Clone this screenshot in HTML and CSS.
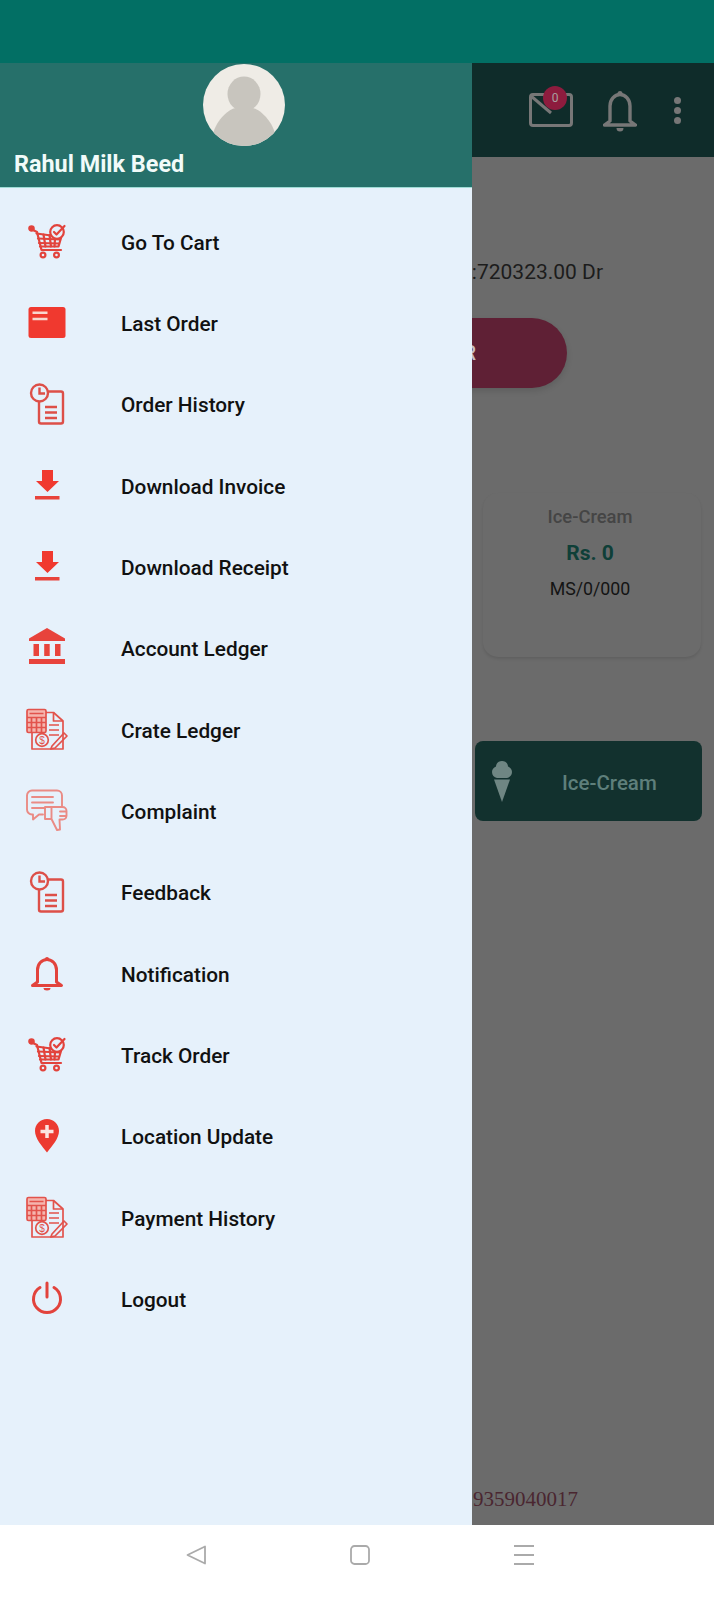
FILE: index.html
```html
<!DOCTYPE html>
<html lang="en">
<head>
    <meta charset="UTF-8">
    <meta name="viewport" content="width=device-width, initial-scale=1.0">
    <title>Rahul Milk Beed</title>
    <link rel="stylesheet" href="styles.css">
</head>
<body>
    <svg class="sprite" width="0" height="0">
        <symbol id="i-cart" viewBox="0 0 46 46">
            <g fill="none" stroke="#e2433c" stroke-width="2.200" stroke-linecap="round" stroke-linejoin="round">
                <circle cx="7.500" cy="8.500" r="2.200" fill="#e2433c"/>
                <path d="M9 10l4 2 4.500 18H37"/>
                <path d="M12.500 13.500L27 15.500M37 18l-2.500 8.500H16M14 18.500l22 1M15 23l20 .5"/>
                <path d="M19.500 14.500l2 12M25.500 15l1.500 11.500M31 19l-.5 7.500"/>
                <circle cx="33" cy="12" r="6.800" fill="#e6f1fb"/>
                <path d="M30 12l2.500 2.500 8-8.500"/>
                <circle cx="19" cy="35" r="2.400"/>
                <circle cx="32.500" cy="35" r="2.400"/>
            </g>
        </symbol>
        <symbol id="i-card" viewBox="0 0 46 46">
            <rect x="4.500" y="6" width="37" height="31" rx="2.500" fill="#f0392f"/>
            <path d="M8.500 11.700h15M8.500 18h15" stroke="#f8d5cf" stroke-width="2.500"/>
        </symbol>
        <symbol id="i-history" viewBox="0 0 46 46">
            <g fill="none" stroke="#dd4f48" stroke-width="2.400">
                <rect x="15" y="9.500" width="24" height="32" rx="2"/>
                <path d="M21 25h12M21 30.500h12M21 36h12"/>
                <circle cx="15.500" cy="11" r="8.500" fill="#e6f1fb"/>
                <path d="M15.500 5.500V11.500H21"/>
            </g>
        </symbol>
        <symbol id="i-download" viewBox="0 0 46 46">
            <path d="M18 6h11v11h6L23.500 28 12 17h6z" fill="#f0392f"/>
            <rect x="11" y="32" width="24.500" height="3.500" fill="#e8433a"/>
        </symbol>
        <symbol id="i-bank" viewBox="0 0 46 46">
            <g fill="#e8433c">
                <path d="M23 2L41 12.500V15H5V12.500z"/>
                <rect x="9.500" y="18" width="5.500" height="12"/>
                <rect x="20.200" y="18" width="5.500" height="12"/>
                <rect x="31" y="18" width="5.500" height="12"/>
                <rect x="5" y="33" width="36" height="5"/>
            </g>
        </symbol>
        <symbol id="i-ledger" viewBox="0 0 46 46">
            <g fill="none" stroke="#e2534c" stroke-width="1.700" stroke-linejoin="round">
                <path d="M22 4.500H29.500L39 13V41H8V24"/>
                <path d="M29.500 4.500V13H39"/>
                <path d="M25 17h10M25 22h10M25 27h10"/>
                <rect x="3" y="1.500" width="19" height="23" rx="1.500" fill="#f5b5ae"/>
                <path d="M5.500 5.500h14M3 9.500h19M3 14.500h19M3 19.500h19M7.500 9.500v15M12.500 9.500v15M17.500 9.500v15"/>
                <circle cx="18" cy="32" r="6.300"/>
                <path d="M28 38l12-13 3 3-12 12-4.200 1z"/>
            </g>
        </symbol>
        <symbol id="i-complaint" viewBox="0 0 46 46">
            <g fill="none" stroke="#ea8b85" stroke-width="1.900" stroke-linejoin="round" stroke-linecap="round">
                <path d="M8 1.500H33a5 5 0 0 1 5 5V17M19 25.500H15L9 30.500V25.500H8a5 5 0 0 1-5-5V6.500a5 5 0 0 1 5-5"/>
                <path d="M8 8h21M8 13.500h21M8 19h13"/>
                <path d="M21 18h6.500V30H21zM27.500 18H38.500a4 4 0 0 1 4 4V27a4 4 0 0 1-4 3.500H35.500L36 40.500 33 41 27.500 30"/>
                <path d="M36 22.500h6M36 27h6"/>
            </g>
        </symbol>
        <symbol id="i-bell" viewBox="0 0 46 46">
            <path d="M13.500 30V18a9.500 10.500 0 0 1 19 0V30l5 3.500H8.500z" fill="none" stroke="#e2433c" stroke-width="3" stroke-linejoin="round"/>
            <circle cx="23" cy="7" r="2" fill="#e2433c"/>
            <path d="M19.500 36h7a3.500 2.500 0 0 1-7 0z" fill="#e2433c"/>
        </symbol>
        <symbol id="i-pin" viewBox="0 0 46 46">
            <path d="M23 5c6.700 0 12 5.300 12 12 0 7.500-7 15-12 21.500C18 32 11 24.500 11 17 11 10.300 16.300 5 23 5z" fill="#ec3a30"/>
            <path d="M23 11v13M16.500 17.500h13" stroke="#fbe4e0" stroke-width="3.500"/>
        </symbol>
        <symbol id="i-power" viewBox="0 0 46 46">
            <g fill="none" stroke="#e2433c" stroke-width="3" stroke-linecap="round">
                <path d="M16 10.500a13.500 13.500 0 1 0 14 0"/>
                <path d="M23 6V20"/>
            </g>
        </symbol>
    </svg>

    <div class="status-bar"></div>

    <div class="screen">
        <header class="app-bar">
            <div class="mail">
                <svg class="mail-icon" viewBox="0 0 44 34">
                    <rect x="1.500" y="1.500" width="41" height="31" rx="2.500" fill="none" stroke="#777" stroke-width="3"/>
                    <path d="M2 3l20 17" fill="none" stroke="#777" stroke-width="3"/>
                </svg>
                <span class="badge">0</span>
            </div>
            <svg class="bar-bell" viewBox="0 0 34 41">
                <path d="M7 30V15a10 11.500 0 0 1 20 0V30l5.500 4H1.500z" fill="none" stroke="#777" stroke-width="3.400" stroke-linejoin="round"/>
                <circle cx="17" cy="2.500" r="2.500" fill="#777"/>
                <path d="M13.500 37h7a3.500 3.500 0 0 1-7 0z" fill="#777"/>
            </svg>
            <div class="dots"><i></i><i></i><i></i></div>
        </header>

        <div class="content">
            <p class="balance">:720323.00 Dr</p>
            <div class="order-wrap"><button class="order-btn">ORDER</button></div>
            <div class="card">
                <div class="card-title">Ice-Cream</div>
                <div class="card-price">Rs. 0</div>
                <div class="card-code">MS/0/000</div>
            </div>
            <div class="category">
                <svg class="cone" viewBox="0 0 20 41">
                    <path d="M10 0c3.500 0 6 2.500 6 5.500 2.500 1 4 3 4 5.500 0 3-2 5.500-5 6H5c-3 -.5-5-3-5-6 0-2.500 1.500-4.500 4-5.500C4 2.500 6.500 0 10 0z" fill="#6f8683"/>
                    <path d="M2 18.500h16L10 41z" fill="#6f8683"/>
                </svg>
                <span class="category-name">Ice-Cream</span>
            </div>
            <p class="phone">9359040017</p>
        </div>

        <nav class="drawer">
            <div class="drawer-head">
                <div class="avatar">
                    <svg viewBox="0 0 82 82" width="82" height="82">
                        <rect width="82" height="82" fill="#efece6"/>
                        <ellipse cx="41" cy="30" rx="16.500" ry="17.500" fill="#c8c5be"/>
                        <path d="M10 82V70c3-14 17-26 23-26h16c6 0 20 12 23 26v12z" fill="#c8c5be"/>
                    </svg>
                </div>
                <div class="user-name">Rahul Milk Beed</div>
            </div>
            <ul class="menu">
                <li class="menu-item"><svg class="menu-icon"><use href="#i-cart"/></svg>Go To Cart</li>
                <li class="menu-item"><svg class="menu-icon"><use href="#i-card"/></svg>Last Order</li>
                <li class="menu-item"><svg class="menu-icon"><use href="#i-history"/></svg>Order History</li>
                <li class="menu-item"><svg class="menu-icon"><use href="#i-download"/></svg>Download Invoice</li>
                <li class="menu-item"><svg class="menu-icon"><use href="#i-download"/></svg>Download Receipt</li>
                <li class="menu-item"><svg class="menu-icon"><use href="#i-bank"/></svg>Account Ledger</li>
                <li class="menu-item"><svg class="menu-icon" viewBox="0 0 46 46"><use href="#i-ledger"/><text class="dollar" x="18" y="35.500">$</text></svg>Crate Ledger</li>
                <li class="menu-item"><svg class="menu-icon"><use href="#i-complaint"/></svg>Complaint</li>
                <li class="menu-item"><svg class="menu-icon"><use href="#i-history"/></svg>Feedback</li>
                <li class="menu-item"><svg class="menu-icon"><use href="#i-bell"/></svg>Notification</li>
                <li class="menu-item"><svg class="menu-icon"><use href="#i-cart"/></svg>Track Order</li>
                <li class="menu-item"><svg class="menu-icon"><use href="#i-pin"/></svg>Location Update</li>
                <li class="menu-item"><svg class="menu-icon" viewBox="0 0 46 46"><use href="#i-ledger"/><text class="dollar" x="18" y="35.500">$</text></svg>Payment History</li>
                <li class="menu-item"><svg class="menu-icon"><use href="#i-power"/></svg>Logout</li>
            </ul>
        </nav>
    </div>

    <footer class="nav-bar">
        <svg class="nav-icon" viewBox="0 0 20 20"><path d="M19 1.500V18.500L1.500 10z" fill="none" stroke="#aaa" stroke-width="1.800" stroke-linejoin="round"/></svg>
        <svg class="nav-icon" viewBox="0 0 20 20"><rect x="1" y="1" width="18" height="18" rx="3.500" fill="none" stroke="#aaa" stroke-width="1.800"/></svg>
        <svg class="nav-icon" viewBox="0 0 20 20"><path d="M0 1h20M0 10h20M0 19h20" stroke="#aaa" stroke-width="1.800"/></svg>
    </footer>
</body>
</html>
```
FILE: styles.css
```css
* {
    box-sizing: border-box;
}

html, body {
    margin: 0;
    height: 100%;
}

body {
    width: 714px;
    height: 1599px;
    display: flex;
    flex-direction: column;
    overflow: hidden;
    font-family: Roboto, "Liberation Sans", sans-serif;
    background-color: #ffffff;
}

.sprite {
    position: absolute;
}

.status-bar {
    height: 63px;
    background-color: #026f64;
}

.screen {
    position: relative;
    height: 1462px;
    display: flex;
    flex-direction: column;
    background-color: #6b6b6b;
}

/* app behind the drawer */
.app-bar {
    height: 94px;
    display: flex;
    justify-content: flex-end;
    align-items: flex-start;
    background-color: #0f2c2a;
}

.mail {
    position: relative;
    margin-top: 30px;
    margin-right: 30px;
    width: 44px;
    height: 34px;
}

.mail-icon {
    display: block;
    width: 44px;
    height: 34px;
}

.badge {
    position: absolute;
    top: -7px;
    left: 14px;
    width: 24px;
    height: 24px;
    border-radius: 50%;
    background-color: #8d1c3e;
    color: #a8a0a0;
    font-size: 12px;
    line-height: 24px;
    text-align: center;
}

.bar-bell {
    margin-top: 28px;
    width: 34px;
    height: 41px;
}

.dots {
    margin: 34px 33px 0 37px;
    display: flex;
    flex-direction: column;
    gap: 3px;
}

.dots i {
    width: 7px;
    height: 7px;
    border-radius: 50%;
    background-color: #777777;
}

.content {
    flex: 1;
    display: flex;
    flex-direction: column;
    align-items: flex-end;
}

.balance {
    margin: 103px 111px 0 0;
    font-size: 21px;
    line-height: 24px;
    color: #1c1c1c;
}

.order-wrap {
    margin-top: 34px;
    padding-right: 147px;
}

.order-btn {
    display: block;
    width: 300px;
    height: 70px;
    padding: 0 91px 0 0;
    border: none;
    border-radius: 35px;
    background-color: #5f2035;
    box-shadow: 0 3px 6px rgba(0, 0, 0, 0.12);
    color: #c9bcc0;
    font-family: inherit;
    font-size: 20px;
    font-weight: 500;
    text-align: right;
}

.card {
    margin-top: 105px;
    margin-right: 13px;
    width: 218px;
    height: 164px;
    padding: 14px 4px 0 0;
    border-radius: 15px;
    background-color: #6b6b6b;
    box-shadow: 0 2px 3px rgba(0, 0, 0, 0.1);
    text-align: center;
}

.card-title {
    font-size: 18.400px;
    font-weight: 500;
    line-height: 20px;
    color: #454545;
}

.card-price {
    margin-top: 14px;
    font-size: 21px;
    font-weight: 700;
    line-height: 24px;
    color: #0f3f38;
}

.card-code {
    margin-top: 14px;
    font-size: 17.800px;
    line-height: 20px;
    color: #141414;
}

.category {
    margin-top: 84px;
    margin-right: 12px;
    width: 227px;
    height: 80px;
    display: flex;
    align-items: center;
    padding-left: 17px;
    border-radius: 8px;
    background-color: #12312e;
}

.cone {
    width: 20px;
    height: 41px;
}

.category-name {
    margin: 3px 0 0 50px;
    font-size: 20.500px;
    font-weight: 500;
    color: #5e7f7b;
}

.phone {
    margin: auto 136px 13px 0;
    font-family: "Liberation Serif", serif;
    font-size: 21px;
    line-height: 26px;
    color: #4a2630;
}

/* side drawer */
.drawer {
    position: absolute;
    top: 0;
    left: 0;
    bottom: 0;
    width: 472px;
    background-color: #e6f1fb;
}

.drawer-head {
    height: 125px;
    padding-top: 1px;
    background-color: #26706a;
    border-bottom: 1px solid #9edbd5;
}

.avatar {
    width: 82px;
    height: 82px;
    margin-left: 203px;
    border-radius: 50%;
    overflow: hidden;
}

.avatar svg {
    display: block;
}

.user-name {
    margin: 4px 0 0 14px;
    font-size: 23.400px;
    font-weight: 700;
    line-height: 28px;
    color: #f1fbf9;
}

.menu {
    list-style: none;
    margin: 0;
    padding: 14px 0 0;
}

.menu-item {
    height: 81.350px;
    display: flex;
    align-items: center;
    padding-left: 24px;
    font-size: 20.800px;
    font-weight: 500;
    color: #111111;
}

.menu-icon {
    width: 46px;
    height: 46px;
    margin-right: 51px;
    flex-shrink: 0;
}

.dollar {
    font-family: "Liberation Sans", sans-serif;
    font-size: 10px;
    text-anchor: middle;
    fill: #e2534c;
}

/* android buttons */
.nav-bar {
    flex: 1;
    display: flex;
    align-items: flex-start;
    gap: 144px;
    padding: 20px 0 0 186px;
    background-color: #ffffff;
}

.nav-icon {
    width: 20px;
    height: 20px;
}
```
